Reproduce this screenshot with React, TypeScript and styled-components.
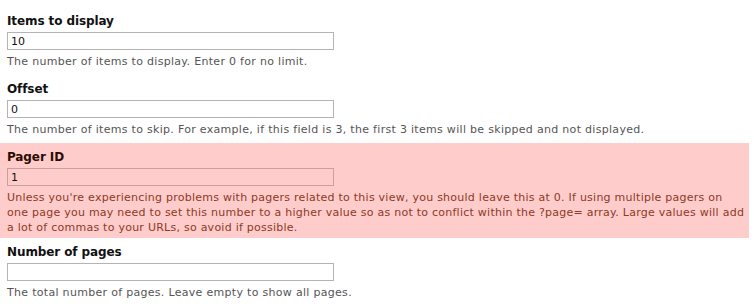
import React from "react";
import styled, { createGlobalStyle } from "styled-components";

const Global = createGlobalStyle`
  html, body { margin: 0; padding: 0; background: #ffffff; }
  body { font-family: "DejaVu Sans", Verdana, sans-serif; }
`;

const Page = styled.div`
  width: 749px;
  display: flex;
  flex-direction: column;
  padding-top: 7px;
`;

const Item = styled.div<{ $error?: boolean }>`
  display: flex;
  flex-direction: column;
  padding: 6px 7px ${(p) => (p.$error ? "3px" : "6px")} 7px;
  background: ${(p) => (p.$error ? "#ffcccc" : "transparent")};
`;

const Label = styled.label<{ $error?: boolean }>`
  font-size: 12px;
  font-weight: bold;
  line-height: 16px;
  letter-spacing: -0.1px;
  color: ${(p) => (p.$error ? "#2b0c02" : "#111111")};
  margin-bottom: 3px;
`;

const Input = styled.input<{ $error?: boolean }>`
  box-sizing: border-box;
  width: 327px;
  height: 18px;
  margin: 0;
  padding: 0 3px;
  font-family: "DejaVu Sans", Verdana, sans-serif;
  font-size: 11px;
  color: #111111;
  background: ${(p) => (p.$error ? "#ffcccc" : "#ffffff")};
  border: 1px solid ${(p) => (p.$error ? "#c9a0a0" : "#b4b4b4")};
  border-radius: 0;
  outline: none;
`;

const Description = styled.div<{ $error?: boolean }>`
  font-size: 11px;
  line-height: 15px;
  letter-spacing: ${(p) => (p.$error ? "0.25px" : "0.3px")};
  margin-top: 4px;
  color: ${(p) => (p.$error ? "#8c3a24" : "#555555")};
`;

const Line = styled.span`
  display: block;
  white-space: nowrap;
`;

type Field = { label: string; value: string; help: string[]; error?: boolean };

const fields: Field[] = [
  {
    label: "Items to display",
    value: "10",
    help: ["The number of items to display. Enter 0 for no limit."],
  },
  {
    label: "Offset",
    value: "0",
    help: [
      "The number of items to skip. For example, if this field is 3, the first 3 items will be skipped and not displayed.",
    ],
  },
  {
    label: "Pager ID",
    value: "1",
    error: true,
    help: [
      "Unless you're experiencing problems with pagers related to this view, you should leave this at 0. If using multiple pagers on",
      "one page you may need to set this number to a higher value so as not to conflict within the ?page= array. Large values will add",
      "a lot of commas to your URLs, so avoid if possible.",
    ],
  },
  {
    label: "Number of pages",
    value: "",
    help: ["The total number of pages. Leave empty to show all pages."],
  },
];

export default function App() {
  return (
    <Page>
      <Global />
      {fields.map((f) => (
        <Item key={f.label} $error={f.error}>
          <Label $error={f.error}>{f.label}</Label>
          <Input $error={f.error} defaultValue={f.value} />
          <Description $error={f.error}>
            {f.help.map((l) => (
              <Line key={l}>{l}</Line>
            ))}
          </Description>
        </Item>
      ))}
    </Page>
  );
}
